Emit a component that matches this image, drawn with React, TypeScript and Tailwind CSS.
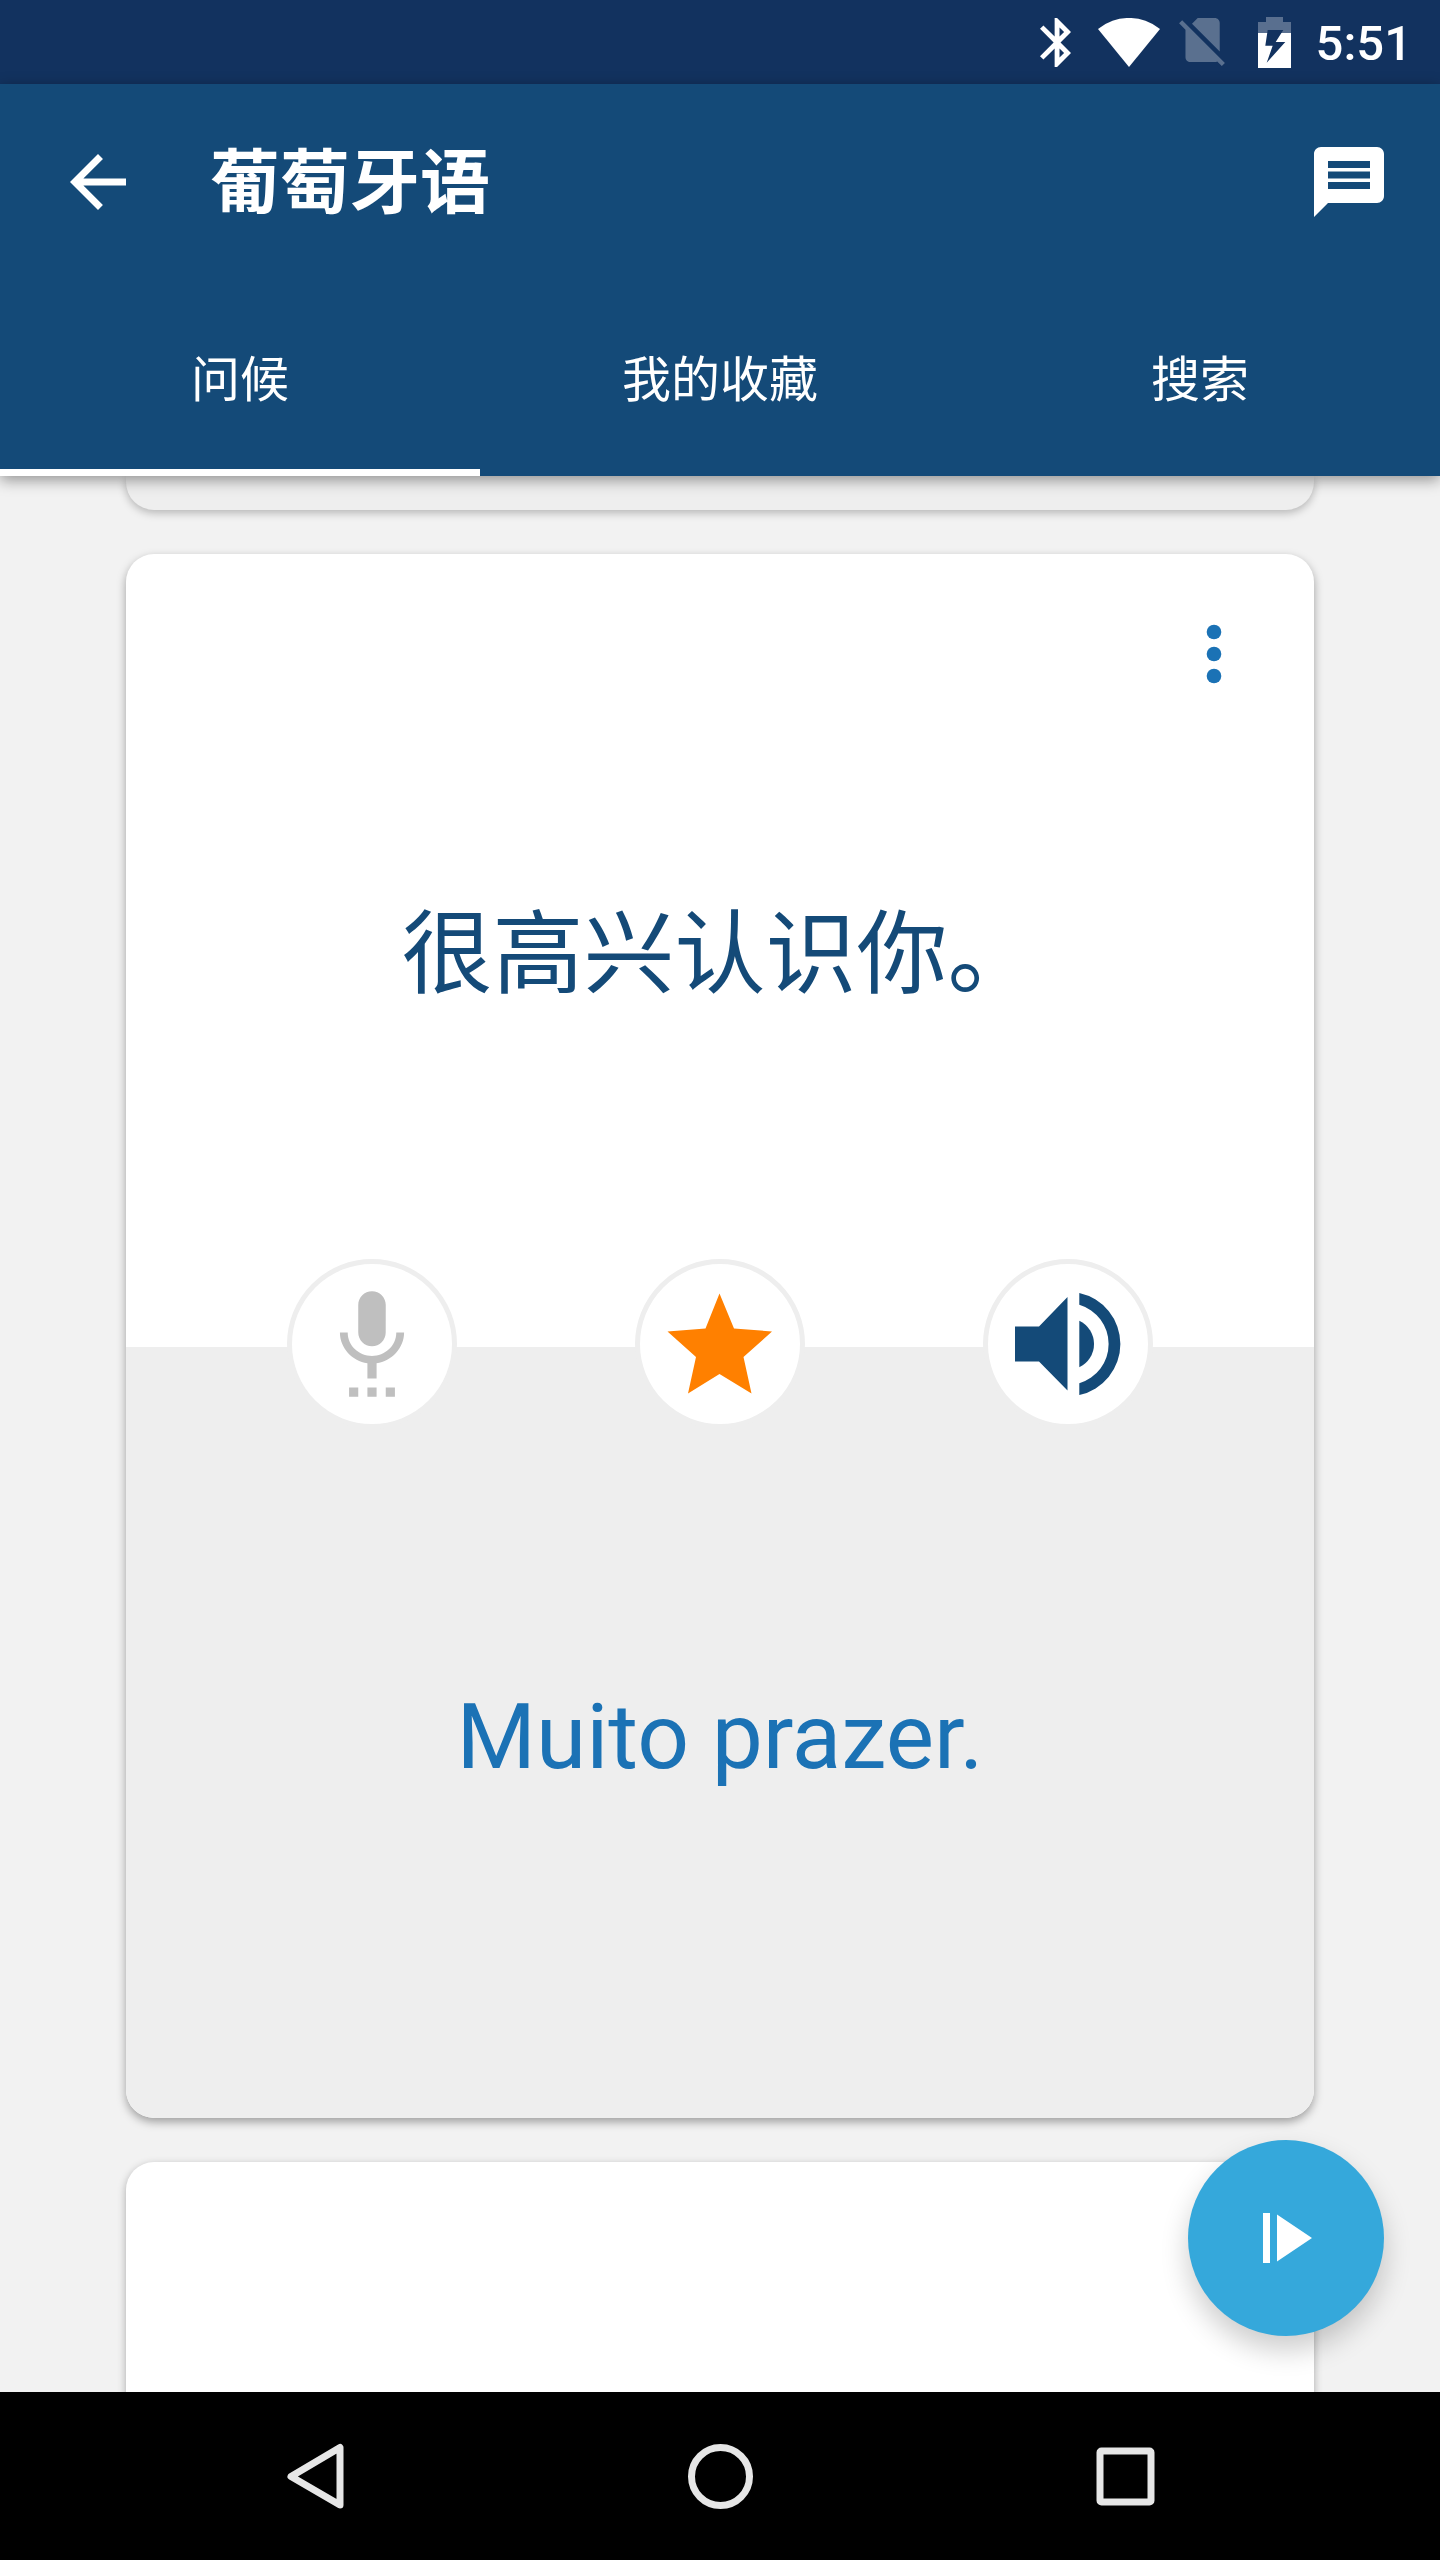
import { useState } from "react"
import type { ReactNode } from "react"

const tabs = ["问候", "我的收藏", "搜索"]

export default function App() {
  return (
    <div className="h-screen flex flex-col overflow-hidden bg-[#f2f2f2] font-[Roboto,'Noto_Sans_CJK_SC',sans-serif]">
      <StatusBar />
      <Header />
      <PhraseList />
      <SystemNav />
    </div>
  )
}

// ============================================
// STATUS BAR
// ============================================
function StatusBar() {
  return (
    <div className="h-[84px] shrink-0 flex items-center justify-end gap-[9px] pr-7 bg-[#12325f] text-white">
      <StatusSlot>
        <svg viewBox="5 2 12.71 20" className="w-[31px] h-[49px]" fill="currentColor">
          <path d="M17.71 7.71L12 2h-1v7.59L6.41 5 5 6.41 10.59 12 5 17.59 6.41 19 11 14.41V22h1l5.71-5.71-4.3-4.29 4.3-4.29zM13 5.83l1.88 1.88L13 9.59V5.83zm1.88 10.46L13 18.17v-3.76l1.88 1.88z" />
        </svg>
      </StatusSlot>
      <StatusSlot>
        <svg viewBox="0 0 62 49" className="w-[62px] h-[49px]" fill="currentColor">
          <path d="M31 49L0 11A49 49 0 0 1 62 11Z" />
        </svg>
      </StatusSlot>
      <StatusSlot>
        <svg viewBox="2.38 3 18.74 19.62" className="w-[46px] h-[48px] opacity-30" fill="currentColor">
          <path d="M18.99 5c0-1.1-.89-2-1.99-2h-7L7.66 5.34 19 16.68 18.99 5zM3.65 3.88L2.38 5.15 5 7.77V19c0 1.1.9 2 2 2h10.01c.35 0 .67-.1.96-.26l1.88 1.88 1.27-1.27L3.65 3.88z" />
        </svg>
      </StatusSlot>
      <StatusSlot>
        <svg viewBox="0 0 33 51" className="w-[33px] h-[51px]" fill="currentColor">
          <path d="M8 0H25V5H33V16H0V5H8Z" opacity="0.3" />
          <path d="M0 16H33V51H0Z" />
          <path d="M9.7 13H25.3L17.7 25H27.3L8.7 45.7L14.7 28.7H7.3Z" fill="#12325f" />
        </svg>
      </StatusSlot>
      <span className="pt-1 text-[49px] leading-[58px] font-medium">5:51</span>
    </div>
  )
}

function StatusSlot({ children }: { children: ReactNode }) {
  return <span className="w-16 flex justify-center">{children}</span>
}

// ============================================
// HEADER + TABS
// ============================================
function Header() {
  const [active, setActive] = useState(0)

  return (
    <header className="relative z-10 shrink-0 bg-[#144a78] text-white shadow-[0_4px_14px_rgba(0,0,0,0.4)]">
      <div className="h-[196px] flex items-center pl-14 pr-[49px]">
        <button type="button" aria-label="返回" className="shrink-0">
          <svg viewBox="0 0 24 24" className="size-[84px]" fill="currentColor">
            <path d="M20 11H7.83l5.59-5.59L12 4l-8 8 8 8 1.41-1.41L7.83 13H20v-2z" />
          </svg>
        </button>
        <h1 className="flex-1 pt-1 pl-[70px] text-[70px] leading-[84px] font-bold">葡萄牙语</h1>
        <button type="button" aria-label="反馈" className="shrink-0">
          <svg viewBox="0 0 24 24" className="size-[84px]" fill="currentColor">
            <path d="M20 2H4c-1.1 0-2 .9-2 2v18l4-4h14c1.1 0 2-.9 2-2V4c0-1.1-.9-2-2-2zM6 6h12v2H6V6zm0 3h12v2H6V9zm0 3h12v2H6v-2z" />
          </svg>
        </button>
      </div>
      <div role="tablist" className="h-[196px] grid grid-cols-3">
        {tabs.map((tab, i) => (
          <button
            key={tab}
            type="button"
            role="tab"
            aria-selected={i === active}
            onClick={() => setActive(i)}
            className={`pt-1.5 border-y-[7px] border-t-transparent text-[49px] leading-[58px] ${
              i === active ? "border-b-white" : "border-b-transparent"
            }`}
          >
            {tab}
          </button>
        ))}
      </div>
    </header>
  )
}

// ============================================
// PHRASE CARDS
// ============================================
function PhraseList() {
  return (
    <main className="relative flex-1 min-h-0 overflow-hidden flex flex-col gap-11 px-[126px]">
      <div className="h-[34px] shrink-0 rounded-b-[28px] bg-[#eeeeee] shadow-[0_3px_8px_rgba(0,0,0,0.25)]" />
      <PhraseCard source="很高兴认识你。" target="Muito prazer." />
      <div className="flex-1 -mb-11 rounded-t-[28px] bg-white shadow-[0_3px_8px_rgba(0,0,0,0.3)]" />

      <button
        type="button"
        aria-label="播放"
        className="absolute right-14 bottom-14 size-[196px] rounded-full flex items-center justify-center bg-[#35a8db] text-white shadow-[0_14px_28px_rgba(0,0,0,0.2)]"
      >
        <svg viewBox="0 0 84 84" className="size-[84px]" fill="currentColor">
          <path d="M19 17H26V67H19ZM33 18.5L68 42L33 65.5Z" />
        </svg>
      </button>
    </main>
  )
}

function PhraseCard({ source, target }: { source: string; target: string }) {
  const [starred, setStarred] = useState(true)

  return (
    <article className="shrink-0 rounded-[28px] bg-white shadow-[0_4px_10px_rgba(0,0,0,0.35)]">
      <div className="relative h-[793px] flex items-center justify-center text-[#144a78]">
        <p className="pt-2 text-[91px] leading-[108px]" lang="zh-CN">{source}</p>
        <button type="button" aria-label="更多" className="absolute top-[58px] right-[58px] text-[#1b72b5]">
          <svg viewBox="0 0 84 84" className="size-[84px]" fill="currentColor">
            <circle cx="42" cy="20" r="7.3" />
            <circle cx="42" cy="42" r="7.3" />
            <circle cx="42" cy="64" r="7.3" />
          </svg>
        </button>
      </div>

      {/* actions straddle the two halves */}
      <div className="relative z-10 -mt-[88px] -mb-[82px] flex justify-center gap-[178px]">
        <RoundButton label="录音">
          <svg viewBox="0 0.5 24 24" className="size-[110px] text-[#bfbfbf]" fill="currentColor">
            <path d="M7 24h2v-2H7v2zm5-11c1.66 0 2.99-1.34 2.99-3L15 4c0-1.66-1.34-3-3-3S9 2.34 9 4v6c0 1.66 1.34 3 3 3zm-1 11h2v-2h-2v2zm4 0h2v-2h-2v2zm4-14h-1.7c0 3-2.54 5.1-5.3 5.1S6.7 13 6.7 10H5c0 3.41 2.72 6.23 6 6.72V20h2v-3.28c3.28-.49 6-3.31 6-6.72z" />
          </svg>
        </RoundButton>
        <RoundButton label="收藏" onClick={() => setStarred(!starred)}>
          <svg
            viewBox="0 0 110 110"
            className={`size-[110px] ${starred ? "text-[#ff8000]" : "text-[#bfbfbf]"}`}
            fill="currentColor"
          >
            <path d="M54.5 4.5L69 39.5L107 42.5L78.5 68L86.5 104.5L54.5 85L23 104.5L31 68L2.5 42.5L40.5 39.5Z" />
          </svg>
        </RoundButton>
        <RoundButton label="朗读">
          <svg viewBox="0 0 110 110" className="size-[110px] text-[#144a78]" fill="currentColor">
            <path d="M2 37.5H26L54.5 8V101.5L26 72.5H2Z" />
            <path d="M66.3 4A52.2 52.2 0 0 1 66.3 106V94.3A41 41 0 0 0 66.3 15.7Z" />
            <path d="M66.3 31.7A25.8 25.8 0 0 1 66.3 78.3Z" />
          </svg>
        </RoundButton>
      </div>

      <div className="h-[771px] rounded-b-[28px] flex items-center justify-center bg-[#eeeeee] text-[#1b72b5]">
        <p className="pt-2 text-[91px] leading-[108px]" lang="pt">{target}</p>
      </div>
    </article>
  )
}

function RoundButton({
  label,
  onClick,
  children,
}: {
  label: string
  onClick?: () => void
  children: ReactNode
}) {
  return (
    <button
      type="button"
      aria-label={label}
      onClick={onClick}
      className="size-[170px] rounded-full border-[5px] border-[#eeeeee] bg-white flex items-center justify-center"
    >
      {children}
    </button>
  )
}

// ============================================
// SYSTEM NAVIGATION
// ============================================
function SystemNav() {
  return (
    <nav className="h-[168px] shrink-0 grid grid-cols-3 px-28 bg-black text-[#e6e6e6]">
      <button type="button" aria-label="后退" className="flex items-center justify-center">
        <svg viewBox="0 0 70 70" className="size-[70px]" fill="none" stroke="currentColor" strokeWidth="7" strokeLinejoin="round">
          <path d="M60 6.5V64L11 35.5Z" />
        </svg>
      </button>
      <button type="button" aria-label="主屏幕" className="flex items-center justify-center">
        <svg viewBox="0 0 70 70" className="size-[70px]" fill="none" stroke="currentColor" strokeWidth="7">
          <circle cx="35.5" cy="35.5" r="29" />
        </svg>
      </button>
      <button type="button" aria-label="最近任务" className="flex items-center justify-center">
        <svg viewBox="0 0 70 70" className="size-[70px]" fill="none" stroke="currentColor" strokeWidth="7">
          <rect x="10" y="10" width="51" height="51" rx="1.5" />
        </svg>
      </button>
    </nav>
  )
}
